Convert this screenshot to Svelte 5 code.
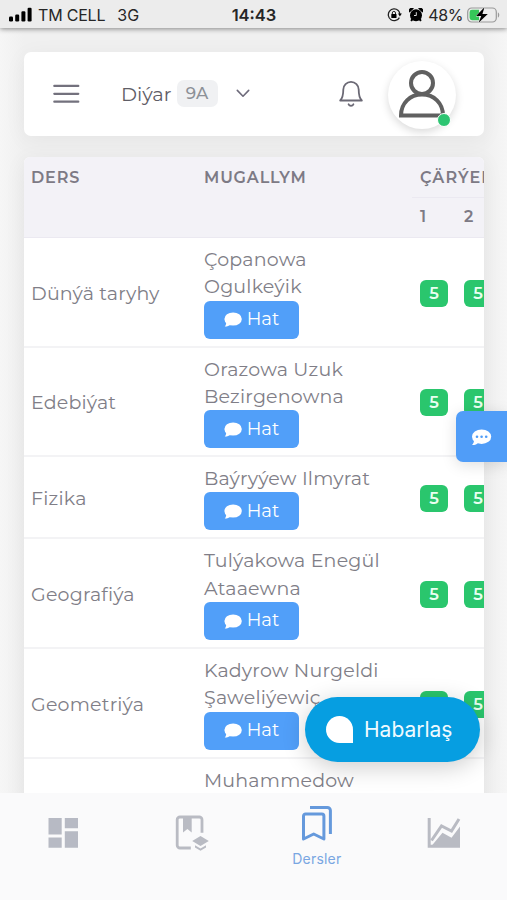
<script>
	const terms = [1, 2];

	const lessons = [
		{ subject: "Dünýä taryhy", teacher: ["Çopanowa", "Ogulkeýik"], grades: [5, 5] },
		{ subject: "Edebiýat", teacher: ["Orazowa Uzuk", "Bezirgenowna"], grades: [5, 5] },
		{ subject: "Fizika", teacher: ["Baýryýew Ilmyrat"], grades: [5, 5] },
		{ subject: "Geografiýa", teacher: ["Tulýakowa Enegül", "Ataaewna"], grades: [5, 5] },
		{ subject: "Geometriýa", teacher: ["Kadyrow Nurgeldi", "Şaweliýewiç"], grades: [5, 5] },
		{ subject: "", teacher: ["Muhammedow", ""], grades: [] }
	];
</script>

<div class="screen">
	<header class="status">
		<div class="carrier">
			<svg width="24" height="16" viewBox="0 0 24 16">
				<rect x="0" y="9.5" width="4" height="5" rx="1.2" />
				<rect x="6.2" y="7.5" width="4" height="7" rx="1.2" />
				<rect x="12.4" y="4.3" width="4" height="10.2" rx="1.2" />
				<rect x="18.6" y="0.8" width="4" height="13.7" rx="1.2" />
			</svg>
			<span class="operator">TM CELL</span>
			<span class="network">3G</span>
		</div>
		<time>14:43</time>
		<div class="power">
			<svg class="lock" width="15" height="14" viewBox="0 0 15 14">
				<path d="M11.2 2.4A5.9 5.9 0 1 0 12.4 9.6M12.8 5.8A6 6 0 0 0 11.2 2.4" fill="none" stroke="#222" stroke-width="1.3" />
				<path d="M11 5.6h3.8l-1.9 2.8z" />
				<rect x="4.3" y="6" width="5.2" height="4" rx=".5" />
				<path d="M5.3 6V5a1.6 1.6 0 0 1 3.2 0v1" fill="none" stroke="#222" />
			</svg>
			<svg class="alarm" width="14" height="14" viewBox="0 0 14 14">
				<circle cx="7" cy="7.2" r="6" />
				<path d="M.6 4.6A2.6 2.6 0 0 1 4.9.6zM13.4 4.6A2.6 2.6 0 0 0 9.1.6zM2.3 10.4l2 1.4-1.5 1.8-1.4-1zM11.7 10.4l-2 1.4 1.5 1.8 1.4-1z" />
				<path d="M7.3 4.2v3.3H5" fill="none" stroke="#ddd" stroke-width="1" />
			</svg>
			<span class="percent">48%</span>
			<svg class="battery" width="33" height="16" viewBox="0 0 33 16">
				<rect x=".7" y="1" width="28.6" height="14" rx="4" fill="none" stroke="#999" stroke-width="1.2" />
				<path d="M5 2.8h7v10.4H5a2.4 2.4 0 0 1-2.4-2.4V5.2A2.4 2.4 0 0 1 5 2.8z" fill="#35c759" />
				<path d="M30.9 5.5c1.8.5 1.8 4.5 0 5z" fill="#999" />
				<path d="M17.5.3 9 9h5.2l-2.6 6.7L20.8 7h-5.4z" stroke="#eee" stroke-width="1" paint-order="stroke" />
			</svg>
		</div>
	</header>

	<nav class="topbar">
		<button class="menu" aria-label="Menu">
			<svg width="27" height="20" viewBox="0 0 27 20">
				<path d="M1.3 1.9h24M1.3 9.8h24M1.3 17.7h24" fill="none" stroke="#73717d" stroke-width="2.2" stroke-linecap="round" />
			</svg>
		</button>
		<button class="pupil">
			<span class="name">Diýar</span>
			<span class="class">9A</span>
			<svg width="14" height="9" viewBox="0 0 14 9">
				<path d="M1.3 1.4 7 7.2l5.7-5.8" fill="none" stroke="#6e6b7b" stroke-width="1.6" stroke-linecap="round" stroke-linejoin="round" />
			</svg>
		</button>
		<button class="bell" aria-label="Notifications">
			<svg width="24" height="28" viewBox="0 0 24 28">
				<path d="M1.2 20.5C3.4 18.3 4.3 15.8 4.3 9.5a7.7 7.7 0 0 1 15.4 0c0 6.3.9 8.8 3.1 11z" fill="none" stroke="#6b6975" stroke-width="1.8" stroke-linejoin="round" />
				<path d="M9.6 24.3c.9 1.9 3.9 1.9 4.8 0" fill="none" stroke="#6b6975" stroke-width="1.8" stroke-linecap="round" />
			</svg>
		</button>
		<div class="avatar">
			<svg width="48" height="48" viewBox="0 0 48 48">
				<circle cx="24" cy="13" r="11" />
				<path d="M3 45.5C3 33 12 24.5 24 24.5S45 33 45 45.5z" />
			</svg>
			<span class="online"></span>
		</div>
	</nav>

	<main class="card">
		<table>
			<colgroup>
				<col class="col-subject" />
				<col class="col-teacher" />
				{#each terms as term}
					<col class="col-term" />
				{/each}
			</colgroup>
			<thead>
				<tr>
					<th rowspan="2">DERS</th>
					<th rowspan="2">MUGALLYM</th>
					<th class="quarter" colspan={terms.length}>ÇÄRÝEK</th>
				</tr>
				<tr>
					{#each terms as term}
						<th class="term">{term}</th>
					{/each}
				</tr>
			</thead>
			<tbody>
				{#each lessons as lesson}
					<tr>
						<td>{lesson.subject}</td>
						<td>
							{#each lesson.teacher as line}
								<div class="line">{line}</div>
							{/each}
							<button class="chat">
								<svg width="18" height="16" viewBox="0 0 18 16">
									<ellipse cx="9.1" cy="7" rx="8.7" ry="6.6" />
									<path d="M2.2 9.5c.2 2.4-.5 3.9-1.5 5.1 2.6 0 4.7-.8 6-2.3z" />
								</svg>
								Hat
							</button>
						</td>
						{#each lesson.grades as grade}
							<td><span class="grade">{grade}</span></td>
						{/each}
					</tr>
				{/each}
			</tbody>
		</table>
	</main>

	<button class="side-chat" aria-label="Chat">
		<svg width="21" height="18" viewBox="0 0 21 18">
			<ellipse cx="10.6" cy="7.7" rx="9.6" ry="7.2" fill="#fff" />
			<path d="M3 10.5c.2 2.6-.8 4.2-2 5.6 3.2 0 5.2-.9 6.6-2.6z" fill="#fff" />
			<g fill="#509df8">
				<circle cx="6" cy="7.7" r="1.3" />
				<circle cx="10.6" cy="7.7" r="1.3" />
				<circle cx="15.2" cy="7.7" r="1.3" />
			</g>
		</svg>
	</button>

	<button class="contact">
		<span class="drop"></span>
		<span>Habarlaş</span>
	</button>

	<nav class="tabs">
		<button class="tab" aria-label="Dashboard">
			<svg width="32" height="32" viewBox="0 0 32 32" fill="#b7bac4">
				<path d="M1.5 1h13.2v16.5H1.5zM17.8 1H31v10.2H17.8zM1.5 20.5h13.2v10.2H1.5zM17.8 14.2H31v16.5H17.8z" />
			</svg>
		</button>
		<button class="tab diary" aria-label="Diary">
			<svg width="34" height="36" viewBox="0 0 34 36">
				<path d="M15.8 33H5a2.8 2.8 0 0 1-2.8-2.8V4.8A2.8 2.8 0 0 1 5 2h19.2A2.8 2.8 0 0 1 27 4.8v13" fill="none" stroke="#b9bbc3" stroke-width="2.8" />
				<path d="M8 2h8.7v15.5l-4.3-3.6L8 17.5zM25.5 21l8.3 5-8.3 5-8.3-5zM20 30.2l5.5 3.2 5.5-3.2v2.2l-5.5 3.4-5.5-3.4z" fill="#b9bbc3" />
			</svg>
		</button>
		<button class="tab active">
			<svg width="31" height="37" viewBox="0 0 31 37" fill="none" stroke="#6599dc" stroke-width="3" stroke-linejoin="round">
				<path d="M2.5 34V11a2 2 0 0 1 2-2h16.4a2 2 0 0 1 2 2v23l-10.2-5z" />
				<path d="M9 2.5h17.4a3 3 0 0 1 3 3V29" />
			</svg>
			<span>Dersler</span>
		</button>
		<button class="tab" aria-label="Statistics">
			<svg width="34" height="32" viewBox="0 0 34 32">
				<path d="M2.2 1v28.2H33" fill="none" stroke="#b9bbc3" stroke-width="3" />
				<path d="M4.5 29 15.5 15.8l9 5L33 9.5V30H4.5z" fill="#b9bbc3" />
				<path d="M4.5 23.5 14.5 9l10 5L32 2" fill="none" stroke="#b9bbc3" stroke-width="3" />
			</svg>
		</button>
	</nav>
</div>

<style>
	:global(body) {
		margin: 0;
		background: #f5f5f5;
	}
	.screen {
		position: relative;
		height: 900px;
		overflow: hidden;
		background: linear-gradient(90deg, #f6f6f6, #f0f0f0 24px, #f0f0f0 484px, #f6f6f6);
		font-family: Montserrat, Inter, "Open Sans", sans-serif;
		color: #807e87;
	}
	button {
		border: 0;
		padding: 0;
		background: none;
		font: inherit;
		color: inherit;
	}
	svg {
		display: block;
		flex: none;
	}

	/* status bar */
	.status {
		position: relative;
		box-sizing: border-box;
		display: grid;
		grid-template-columns: 1fr auto 1fr;
		align-items: center;
		height: 28px;
		padding: 1px 7px 0 9px;
		background: #ececec;
		box-shadow: 0 1px 5px rgba(0, 0, 0, 0.45);
		font-family: Inter, sans-serif;
		font-size: 16px;
		color: #262626;
	}
	.carrier,
	.power {
		display: flex;
		align-items: center;
	}
	.carrier svg {
		margin-right: 5px;
	}
	.operator {
		letter-spacing: -0.2px;
	}
	.network {
		margin-left: 12px;
	}
	.status time {
		margin-right: 1px;
		font-weight: 600;
		font-size: 16.5px;
	}
	.power {
		justify-content: flex-end;
	}
	.percent {
		letter-spacing: -0.4px;
	}
	.alarm {
		margin: 0 5px 0 7px;
	}
	.battery {
		margin-left: 4px;
	}

	/* user bar */
	.topbar {
		box-sizing: border-box;
		display: flex;
		align-items: center;
		height: 84px;
		margin: 24px 23px 21px 24px;
		padding: 0 28px 0 29px;
		border-radius: 7px;
		background: #fff;
		box-shadow: 0 4px 22px rgba(0, 0, 0, 0.05);
	}
	.pupil {
		display: flex;
		align-items: center;
		margin: -1px 0 0 41px;
	}
	.name {
		font-size: 19.4px;
		color: #5f5d66;
	}
	.class {
		margin: 0 18px 0 5px;
		width: 41px;
		border-radius: 7px;
		background: #f0f1f3;
		font-size: 16.8px;
		font-weight: 500;
		line-height: 27px;
		text-align: center;
		color: #8c9097;
	}
	.bell {
		margin-left: auto;
	}
	.avatar {
		position: relative;
		display: flex;
		justify-content: center;
		width: 68px;
		height: 68px;
		margin: 2px 0 0 25px;
		border-radius: 50%;
		background: #fff;
		box-shadow: 0 3px 9px rgba(0, 0, 0, 0.15);
	}
	.avatar svg {
		margin-top: 9px;
		fill: none;
		stroke: #606060;
		stroke-width: 4;
	}
	.online {
		position: absolute;
		right: 5px;
		bottom: 2px;
		width: 12px;
		height: 12px;
		border: 1px solid #fff;
		border-radius: 50%;
		background: #2dc572;
	}

	/* lessons */
	.card {
		width: 460px;
		height: 660px;
		margin-left: 24px;
		overflow: hidden;
		border-radius: 6px 6px 0 0;
		background: #fff;
		box-shadow: 0 4px 22px rgba(0, 0, 0, 0.06);
	}
	table {
		width: 476px;
		table-layout: fixed;
		border-collapse: separate;
		border-spacing: 0;
	}
	.col-subject {
		width: 173px;
	}
	.col-teacher {
		width: 215px;
	}
	.col-term {
		width: 44px;
	}
	th {
		box-sizing: border-box;
		padding: 11px 7px 0;
		height: 41px;
		border-bottom: 1px solid #ebe9f1;
		background: #f3f2f7;
		font-size: 16px;
		font-weight: 600;
		line-height: 19px;
		letter-spacing: 0.85px;
		text-align: left;
		vertical-align: top;
		white-space: nowrap;
		color: #7d7a85;
	}
	.quarter,
	.term {
		padding-left: 8px;
	}
	.quarter {
		letter-spacing: 1.1px;
	}
	.term {
		height: 40px;
		padding-top: 9px;
	}
	td {
		padding: 8px 7px 7px;
		border-bottom: 2px solid #f3f3f5;
		font-size: 19px;
		line-height: 27.3px;
		letter-spacing: 0.2px;
		white-space: nowrap;
	}
	td:not(:nth-child(2)) {
		padding-top: 10px;
	}
	.line {
		height: 27.3px;
	}
	.chat {
		display: flex;
		align-items: center;
		justify-content: center;
		gap: 5px;
		width: 95px;
		height: 38px;
		border-radius: 6px;
		background: #519ff9;
		font-size: 18px;
		color: #fff;
	}
	.chat svg {
		margin-top: 1px;
		fill: #fff;
	}
	.grade {
		display: block;
		width: 28px;
		margin-left: 1px;
		border-radius: 6px;
		background: #2ac66d;
		font-size: 16.5px;
		font-weight: 600;
		line-height: 27px;
		letter-spacing: 0;
		text-align: center;
		color: #e9fff1;
	}

	/* floating buttons */
	.side-chat {
		position: absolute;
		right: 0;
		top: 411px;
		display: flex;
		align-items: center;
		width: 51px;
		height: 51px;
		padding-left: 15px;
		border-radius: 7px 0 0 7px;
		background: #509df8;
		box-shadow: 0 3px 15px rgba(0, 0, 0, 0.13);
	}
	.side-chat svg {
		margin-top: 2px;
	}
	.contact {
		position: absolute;
		left: 305px;
		top: 697px;
		display: flex;
		align-items: center;
		gap: 11px;
		width: 175px;
		height: 65px;
		padding-left: 21px;
		border-radius: 33px;
		background: #069ee1;
		box-shadow: 0 5px 24px rgba(0, 0, 0, 0.2);
		font-family: Inter, sans-serif;
		font-size: 21px;
		color: #effaff;
	}
	.drop {
		width: 27px;
		height: 27px;
		border-radius: 50% 50% 0 50%;
		background: #fff;
	}

	/* bottom tabs */
	.tabs {
		position: absolute;
		left: 0;
		right: 0;
		bottom: 0;
		display: grid;
		grid-template-columns: repeat(4, 1fr);
		height: 107px;
		background: #fafafb;
	}
	.tab {
		display: flex;
		flex-direction: column;
		align-items: center;
		padding-top: 24px;
	}
	.diary {
		padding: 22px 0 0 4px;
	}
	.active {
		padding-top: 12px;
		color: #79a6e2;
		font-family: Inter, sans-serif;
		font-size: 14px;
		letter-spacing: 0.2px;
	}
	.active span {
		margin-top: 8px;
	}
</style>
